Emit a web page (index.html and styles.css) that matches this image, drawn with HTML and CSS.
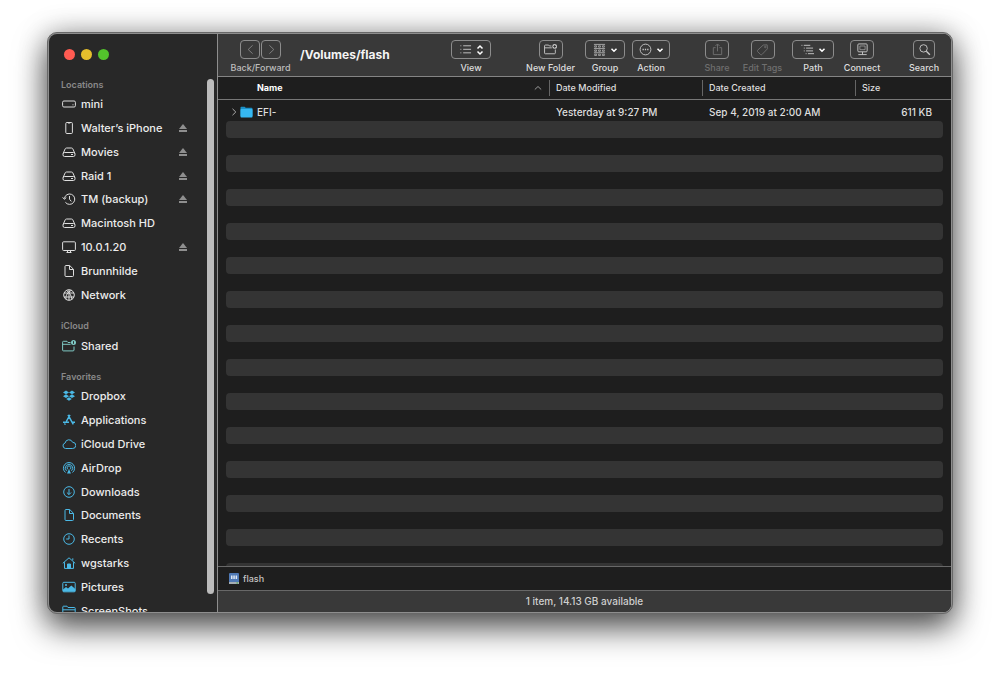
FILE: index.html
```html
<!DOCTYPE html>
<html lang="en">
<head>
<meta charset="utf-8">
<title>/Volumes/flash</title>
<link rel="stylesheet" href="styles.css">
</head>
<body>
<svg class="defs" aria-hidden="true">
  <symbol id="hdd" viewBox="0 0 14 14"><path d="M1.2 8.3 3.2 3.8Q3.6 3 4.5 3h5q.9 0 1.3.8l2 4.5"/><rect x="1" y="7.5" width="12" height="4" rx="1.6"/><path d="M9 9.5h2"/></symbol>
  <symbol id="eject" viewBox="0 0 10 10"><path d="M5 1 9 6H1z"/><rect x="1" y="7" width="8" height="2"/></symbol>
  <symbol id="doc" viewBox="0 0 14 14"><path d="M3 2.5q0-1 1-1h3.700L11.500 5.300v6.200q0 1-1 1H4q-1 0-1-1zM7.500 1.700v3.800h3.800"/></symbol>
  <symbol id="chev" viewBox="0 0 8 8"><path d="m1.500 2.800 2.500 2.500 2.500-2.500"/></symbol>
</svg>
<main class="window">
  <aside class="sidebar">
    <div class="lights">
      <button class="light red" aria-label="Close"></button>
      <button class="light yellow" aria-label="Minimize"></button>
      <button class="light green" aria-label="Zoom"></button>
    </div>
    <div class="sidebar-body">
      <nav class="places">
        <h2>Locations</h2>
        <ul class="locations">
          <li><svg class="icon" viewBox="0 0 14 14"><rect x=".6" y="4" width="12.800" height="6" rx="1.300"/><path d="M10.500 7.800h1"/></svg><a href="#">mini</a></li>
          <li><svg class="icon" viewBox="0 0 14 14"><rect x="3.800" y="1.500" width="6.600" height="11" rx="1"/><path d="M6 2h2.200"/></svg><a href="#">Walter’s iPhone</a><button class="eject" aria-label="Eject"><svg><use href="#eject"/></svg></button></li>
          <li><svg class="icon"><use href="#hdd"/></svg><a href="#">Movies</a><button class="eject" aria-label="Eject"><svg><use href="#eject"/></svg></button></li>
          <li><svg class="icon"><use href="#hdd"/></svg><a href="#">Raid 1</a><button class="eject" aria-label="Eject"><svg><use href="#eject"/></svg></button></li>
          <li><svg class="icon" viewBox="0 0 14 14"><path d="M2.400 6.500a5.200 5.200 0 1 1 1 3.800M.6 5.300l1.800 2 1.900-1.800M7.500 4v3.200l1.800 2.200"/></svg><a href="#">TM (backup)</a><button class="eject" aria-label="Eject"><svg><use href="#eject"/></svg></button></li>
          <li><svg class="icon"><use href="#hdd"/></svg><a href="#">Macintosh HD</a></li>
          <li><svg class="icon" viewBox="0 0 14 14"><rect x=".6" y="1.800" width="12.800" height="8.700" rx="1"/><path d="M5.500 11v1.500h3V11M4.500 12.500h5"/></svg><a href="#">10.0.1.20</a><button class="eject" aria-label="Eject"><svg><use href="#eject"/></svg></button></li>
          <li><svg class="icon"><use href="#doc"/></svg><a href="#">Brunnhilde</a></li>
          <li><svg class="icon" viewBox="0 0 14 14"><circle cx="7" cy="7" r="5.300"/><path d="M2 5h10M2 9h10M4.500 2.500c3 2 5 5 5.500 9M9.500 2.300c-4 2-6 5-5.500 9M7 1.800v10.400"/></svg><a href="#">Network</a></li>
        </ul>
        <h2>iCloud</h2>
        <ul class="teal">
          <li><svg class="icon" viewBox="0 0 14 14"><path d="M8.500 3.500H6L5 2.300H1.500q-.9 0-.9.900V11q0 .9.900.9H11q1 0 1-.9V7.500M.6 5.300h8"/><circle cx="11.500" cy="3.500" r="2.500" fill="currentColor" stroke="none"/><path class="cut" d="M11.500 2.200v2.600"/></svg><a href="#">Shared</a></li>
        </ul>
        <h2>Favorites</h2>
        <ul class="favorites">
          <li><svg class="icon solid" viewBox="0 0 14 14"><path d="M4 1.500 7 3.400 4 5.300 1 3.400zM10 1.500l3 1.900-3 1.900-3-1.900zM4 5.300l3 1.900-3 1.900-3-1.900zM10 5.300l3 1.900-3 1.900-3-1.900zM4.200 9.900 7 8.200l2.800 1.700L7 11.700z"/></svg><a href="#">Dropbox</a></li>
          <li><svg class="icon thick" viewBox="0 0 14 14"><path d="M6 1.800l5.300 9.500M8 1.800 4.300 8.500M1 9.200h6M10.300 9.200H13M3.300 10.500l-.7 1.200"/></svg><a href="#">Applications</a></li>
          <li><svg class="icon" viewBox="0 0 14 14"><path d="M3.600 11.500a2.800 2.800 0 0 1-.5-5.500A3.900 3.900 0 0 1 10.600 5.300a3.100 3.100 0 0 1 .1 6.200z"/></svg><a href="#">iCloud Drive</a></li>
          <li><svg class="icon" viewBox="0 0 14 14"><path d="M3.500 11.500a5.600 5.600 0 1 1 7 0M4.500 9.800a3.700 3.700 0 1 1 5 0M5.800 8.300a1.900 1.900 0 1 1 2.400 0"/><path d="M7 8l2 4.500H5z" fill="currentColor" stroke="none"/></svg><a href="#">AirDrop</a></li>
          <li><svg class="icon" viewBox="0 0 14 14"><circle cx="7" cy="7" r="5.300"/><path d="M7 4v5.500M4.900 7.500 7 9.600l2.100-2.100"/></svg><a href="#">Downloads</a></li>
          <li><svg class="icon"><use href="#doc"/></svg><a href="#">Documents</a></li>
          <li><svg class="icon" viewBox="0 0 14 14"><circle cx="7" cy="7" r="5.300"/><path d="M7 3.500V7H4.200"/></svg><a href="#">Recents</a></li>
          <li><svg class="icon" viewBox="0 0 14 14"><path d="M.8 7.300 7 1.800l6.200 5.500M2.500 6.200v6.200h9V6.200M10.800 2.300v2"/><path d="M5.500 8h3v4.500h-3z" fill="currentColor"/></svg><a href="#">wgstarks</a></li>
          <li><svg class="icon" viewBox="0 0 14 14"><rect x=".8" y="2.300" width="12.400" height="9.500" rx="1"/><path d="M1 9.500l3-2.500 2 1.500L9.300 5.500l4 3.500v2.500H1z" fill="currentColor" stroke="none"/><circle cx="4" cy="5" r="1" fill="currentColor" stroke="none"/></svg><a href="#">Pictures</a></li>
          <li><svg class="icon" viewBox="0 0 14 14"><path d="M.8 3q0-.8.800-.8H5l1 1.300h6.400q.8 0 .8.800v7.500H.8zM.8 5.800h12.400"/></svg><a href="#">ScreenShots</a></li>
        </ul>
      </nav>
      <div class="scrollbar"></div>
    </div>
  </aside>

  <section class="content">
    <header class="toolbar">
      <div class="tool history" role="group" aria-labelledby="history-label">
        <span class="pair">
          <button class="box dim" aria-label="Back"><svg class="glyph" viewBox="0 0 14 14"><path d="M9.300 2.500 4.500 7l4.800 4.500"/></svg></button>
          <button class="box dim" aria-label="Forward"><svg class="glyph" viewBox="0 0 14 14"><path d="M4.700 2.500 9.500 7l-4.800 4.500"/></svg></button>
        </span>
        <span id="history-label" class="soft">Back/Forward</span>
      </div>
      <h1>/Volumes/flash</h1>
      <button class="tool view"><span class="box"><svg class="glyph" viewBox="0 0 14 14"><path d="M1.500 3h1M1.500 6.800h1M1.500 10.600h1M4.500 3H13M4.500 6.800H13M4.500 10.600H13"/></svg><svg class="updown" viewBox="0 0 8 12"><path d="M1.500 4.500 4 2l2.500 2.500M1.500 7.500 4 10l2.500-2.500"/></svg></span><span>View</span></button>
      <button class="tool folder"><span class="box"><svg class="glyph" viewBox="0 0 14 14"><path d="M8 3.200H5.800L5 2.200H1.500q-.9 0-.9.900v7.600q0 .9.900.9h9.800q.9 0 .9-.9V7M.6 5.200h7.800"/><circle cx="11.500" cy="3.700" r="2.600" fill="currentColor" stroke="none"/><path class="cut" d="M10 3.700h3M11.500 2.200v3"/></svg></span><span>New Folder</span></button>
      <button class="tool group"><span class="box"><svg class="glyph" viewBox="0 0 14 14"><path d="M1 1.500h12M1 6h12M1 10.500h12" stroke-width=".8"/><path d="M1.800 3h2v1.500h-2zM6 3h2v1.500H6zM10.200 3h2v1.500h-2zM1.800 7.500h2V9h-2zM6 7.500h2V9H6zM10.200 7.500h2V9h-2zM1.800 12h2v1.500h-2zM6 12h2v1.500H6zM10.200 12h2v1.500h-2z" stroke-width=".7"/></svg><svg class="chev"><use href="#chev"/></svg></span><span>Group</span></button>
      <button class="tool action"><span class="box"><svg class="glyph" viewBox="0 0 14 14"><circle cx="7" cy="7" r="5.800"/><path d="M3.800 7h1.400M6.300 7h1.400M8.800 7h1.400" stroke-width="1.500"/></svg><svg class="chev"><use href="#chev"/></svg></span><span>Action</span></button>
      <button class="tool share faded" disabled><span class="box"><svg class="glyph" viewBox="0 0 14 14"><path d="M5 5H2.500v7.500h9V5H9M7 9V1.200M4.700 3.300 7 1l2.300 2.300"/></svg></span><span>Share</span></button>
      <button class="tool tags faded" disabled><span class="box"><svg class="glyph" viewBox="0 0 14 14"><path d="M7.800 2.200 12 2l.3 4.300-6 6.200q-.7.600-1.400 0L1.700 9.200q-.6-.7 0-1.400z"/><circle cx="10" cy="4.300" r=".8"/></svg></span><span>Edit Tags</span></button>
      <button class="tool path"><span class="box"><svg class="glyph" viewBox="0 0 14 14"><path d="M.5 2.500h1M3 2.500h7M3 5.500h1M5.500 5.500H13M3 8.500h1M5.500 8.500H13M5 11.500h1M7.500 11.500H14"/></svg><svg class="chev"><use href="#chev"/></svg></span><span>Path</span></button>
      <button class="tool connect"><span class="box"><svg class="glyph" viewBox="0 0 14 14"><rect x="2" y="1" width="10" height="8.500" rx="1"/><path d="M4.200 3.200h5.600v4H4.200z" stroke-width=".6"/><path d="M7 9.500v3M2.500 12.500h9"/></svg></span><span>Connect</span></button>
      <button class="tool search"><span class="box"><svg class="glyph" viewBox="0 0 14 14"><circle cx="6" cy="5.800" r="4"/><path d="m9 8.800 3.800 3.900" stroke-width="1.400"/></svg></span><span>Search</span></button>
    </header>

    <div class="files">
      <table>
        <colgroup><col><col class="c-date"><col class="c-date"><col class="c-size"></colgroup>
        <thead>
          <tr>
            <th class="name"><span>Name</span><svg class="sort" viewBox="0 0 8 8"><path d="M.8 5.500 4 2.500l3.200 3"/></svg></th>
            <th><span class="col">Date Modified</span></th>
            <th><span class="col">Date Created</span></th>
            <th><span class="col">Size</span></th>
          </tr>
        </thead>
        <tbody>
          <tr>
            <td class="file"><svg class="disclose" viewBox="0 0 8 8"><path d="M2.500.8 5.800 4 2.500 7.200"/></svg><svg class="blue-folder" viewBox="0 0 12 12"><path fill="#1b8fc6" d="M0 1.500q0-.8.800-.8h3.400l1 1H11q1 0 1 1V10H0z"/><rect fill="#36b8f2" y="3" width="12" height="8.500" rx=".8"/></svg><span>EFI-</span></td>
            <td>Yesterday at 9:27 PM</td>
            <td>Sep 4, 2019 at 2:00 AM</td>
            <td class="size">611 KB</td>
          </tr>
        </tbody>
      </table>
      <div class="stripes"><i></i><i></i><i></i><i></i><i></i><i></i><i></i><i></i><i></i><i></i><i></i><i></i><i></i><i></i></div>
    </div>
    <div class="pathbar"><svg viewBox="0 0 10 11"><rect width="10" height="9.500" rx="1" fill="#4f79b5"/><path d="M2 2.500h1.500V6H2zM4.300 2.500h1.500V6H4.300zM6.600 2.500h1.500V6H6.600z" fill="#dfe8f4"/><path d="M0 9h10v2H0z" fill="#a5adb3"/><path d="M7.500 9.500H9v1H7.500z" fill="#3fae45"/></svg><span>flash</span></div>
    <footer>1 item, 14.13 GB available</footer>
  </section>
</main>
</body>
</html>
```
FILE: styles.css
```css
* { box-sizing: border-box; }
body {
  margin: 0;
  height: 100vh;
  padding: 32px 47px 62px;
  background: #fff;
  color: #dedede;
  font: 500 10px/14px Inter, "Liberation Sans", sans-serif;
  overflow: hidden;
}
button { margin: 0; padding: 0; border: 0; background: none; color: inherit; font: inherit; }
svg { display: block; flex: none; fill: none; stroke: currentColor; }
h1, h2, ul { margin: 0; padding: 0; }
.defs { position: absolute; width: 0; height: 0; }

.window {
  display: flex;
  height: 100%;
  border: 1px solid #686868;
  border-radius: 10px;
  background: #8e8e8e;
  padding: 1px;
  overflow: hidden;
  box-shadow: 0 14px 32px rgba(0, 0, 0, .65), 0 0 28px rgba(0, 0, 0, .25);
}

.sidebar {
  flex: none;
  display: flex;
  flex-direction: column;
  width: 168px;
  background: #282828;
  border-radius: 8px 0 0 8px;
  overflow: hidden;
}
.lights { flex: none; display: flex; align-items: center; gap: 6px; height: 43px; padding: 0 0 2px 15px; }
.light { width: 11px; height: 11px; border-radius: 50%; }
.red { background: #ff5b52; }
.yellow { background: #e6bf2c; }
.green { background: #53c22c; }
.sidebar-body { flex: 1; display: flex; min-height: 0; }
.places { flex: 1; min-width: 0; overflow: hidden; }
.places h2 { height: 16px; padding-left: 12px; font-size: 9px; line-height: 16px; font-weight: 600; color: #898989; }
.places ul { display: grid; grid-auto-rows: 1fr; margin-bottom: 11px; list-style: none; }
.locations { height: 214px; }
.favorites { height: 238px; color: #4bb9e6; }
.teal { height: 24px; color: #7fc9c4; }
.places li { display: flex; align-items: center; padding: 0 19px 1px 13px; }
.places a { flex: 1; color: #ececec; font-size: 11px; text-decoration: none; white-space: nowrap; }
.icon { width: 14px; height: 14px; margin-right: 5px; }
.solid { fill: currentColor; stroke: none; }
.thick { stroke-width: 1.5; }
.cut { stroke: #2c2c2c; }
.eject { color: #8f8f8f; }
.eject svg { width: 10px; height: 10px; fill: currentColor; stroke: none; }
.scrollbar { flex: none; width: 7px; margin: 2px 3px 18px 0; border-radius: 4px; background: #bcbcbc; }

.content {
  flex: 1;
  display: flex;
  flex-direction: column;
  min-width: 0;
  margin-left: 1px;
  background: #1e1e1e;
  border-radius: 0 8px 8px 0;
  overflow: hidden;
}
.toolbar {
  flex: none;
  display: flex;
  align-items: flex-end;
  gap: 7px;
  height: 43px;
  padding: 0 11px 1px 12px;
  background: #393939;
  border-bottom: 1px solid #858585;
}
h1 { flex: 1; align-self: center; padding-left: 2px; font-size: 12px; line-height: 18px; font-weight: 700; color: #f4f4f4; white-space: nowrap; }
.tool { flex: none; display: flex; flex-direction: column; align-items: center; gap: 2px; font-size: 9px; line-height: 14px; white-space: nowrap; }
.box { display: flex; align-items: center; justify-content: center; gap: 4px; width: 24px; height: 19px; border: 1px solid #8c8c8c; border-radius: 4px; color: #c8c8c8; }
.glyph { width: 13px; height: 13px; }
.pair { display: flex; gap: 1px; }
.history { width: 61px; }
.history .box { width: 20px; }
.dim { color: #858585; }
.soft { color: #bdbdbd; }
.view { width: 40px; }
.folder { width: 51px; margin-left: 27px; }
.group { width: 40px; margin-left: 2px; }
.action { width: 38px; }
.share { width: 26px; margin-left: 27px; }
.tags { width: 41px; margin-left: 5px; }
.path { width: 42px; margin-left: 2px; }
.connect { width: 38px; margin-left: 2px; }
.search { width: 32px; margin-left: 20px; }
.view .box, .group .box, .action .box, .path .box { width: 100%; }
.search .box { width: 22px; }
.faded, .faded .box { color: #6f6f6f; }
.chev { width: 8px; height: 8px; stroke: #fff; stroke-width: 1.5; }
.updown { width: 8px; height: 12px; stroke: #fff; stroke-width: 1.5; }

.files { flex: 1; display: flex; flex-direction: column; min-height: 0; overflow: hidden; }
table { flex: none; width: 100%; table-layout: fixed; border-collapse: separate; border-spacing: 0; white-space: nowrap; }
.c-date { width: 153px; }
.c-size { width: 96px; }
th { height: 23px; padding: 0; border-bottom: 1px solid #777; text-align: left; font-size: 9px; font-weight: 500; }
th.name { display: flex; align-items: center; justify-content: space-between; padding: 0 7px 0 39px; font-weight: 700; color: #fff; }
.col { display: block; padding-left: 6px; border-left: 1px solid #666; line-height: 16px; }
.sort { width: 8px; height: 8px; color: #999; }
td { height: 21px; padding: 2px 0 0 7px; }
td.file { display: flex; align-items: center; padding-left: 12px; }
.disclose { width: 8px; height: 8px; margin-right: 2px; color: #aaa; }
.blue-folder { width: 13px; height: 12px; margin-right: 4px; stroke: none; }
td.size { padding-right: 19px; text-align: right; }
.stripes { flex: 1; display: flex; flex-direction: column; gap: 17px; margin: 0 8px; min-height: 0; overflow: hidden; }
.stripes i { flex: none; height: 17px; border-radius: 4px; background: #343434; }

.pathbar { flex: none; display: flex; align-items: center; gap: 4px; height: 24px; padding-left: 11px; border-top: 1px solid #686868; font-size: 9px; color: #c4c4c4; }
.pathbar svg { width: 10px; height: 11px; stroke: none; }
footer { flex: none; height: 22px; border-top: 1px solid #686868; background: #393939; line-height: 21px; text-align: center; color: #cfcfcf; }
```
